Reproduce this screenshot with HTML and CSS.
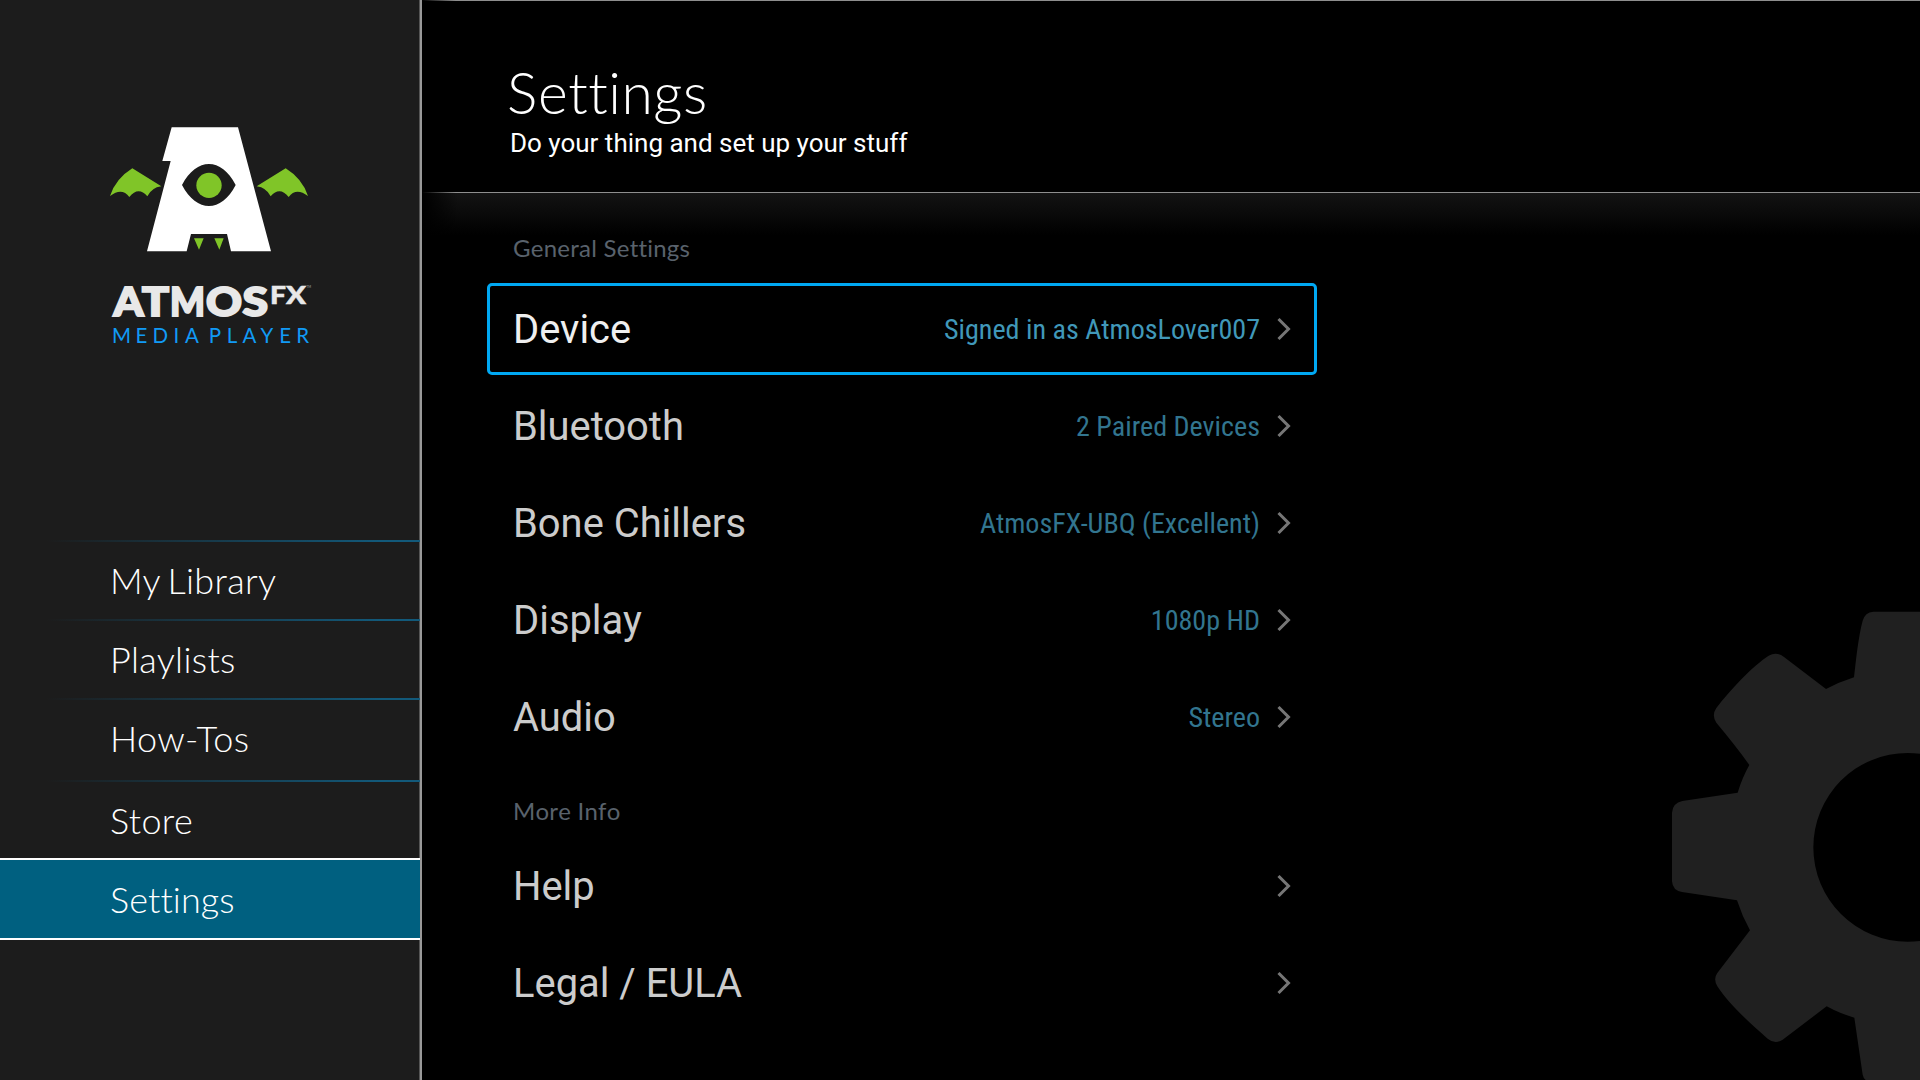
FILE: index.html
```html
<!DOCTYPE html>
<html lang="en">
<head>
<meta charset="utf-8">
<title>AtmosFX Media Player – Settings</title>
<link rel="stylesheet" href="styles.css">
</head>
<body>
<div class="app">
  <aside class="sidebar">
    <div class="brand">
      <svg class="brand-mark" viewBox="0 0 660 435" aria-hidden="true">
        <path class="mark-body" fill-rule="evenodd" d="M215 37H414L513 409H393L381 357H273L260 409H141L212 138H187ZM246 210C290 126 364 126 407 210C364 294 290 294 246 210Z"/>
        <circle class="mark-accent" cx="327" cy="211" r="38"/>
        <path class="mark-accent" d="M282 370H311L297 404ZM343 370H371L358 404Z"/>
        <path class="mark-accent" d="M97 160L184 214Q155 218 142 244Q115 213 88 246Q66 216 30 243Q47 191 97 160Z"/>
        <path class="mark-accent" d="M557 160L470 214Q499 218 512 244Q539 213 566 246Q588 216 624 243Q607 191 557 160Z"/>
      </svg>
      <svg class="brand-name" viewBox="0 0 220 85">
        <g class="word">
          <text x="13.500" y="45.500" textLength="30" lengthAdjust="spacingAndGlyphs">A</text>
          <text x="42" y="45.500" textLength="27" lengthAdjust="spacingAndGlyphs">T</text>
          <text x="70" y="45.500" textLength="35" lengthAdjust="spacingAndGlyphs">M</text>
          <text x="106" y="45.500" textLength="36" lengthAdjust="spacingAndGlyphs">O</text>
          <text x="142.500" y="45.500" textLength="25.500" lengthAdjust="spacingAndGlyphs">S</text>
        </g>
        <g class="word-fx">
          <text x="170" y="34" textLength="16" lengthAdjust="spacingAndGlyphs">F</text>
          <text x="186" y="34" textLength="20" lengthAdjust="spacingAndGlyphs">X</text>
        </g>
        <text class="word-tm" x="206.500" y="17.500">TM</text>
        <text class="tagline" x="12 35.500 52.500 73.500 85 95 108.800 126.800 142.500 160.500 179.300 196.300" y="72.700">MEDIA PLAYER</text>
      </svg>
    </div>
    <nav class="menu">
      <a class="menu-item">My Library</a>
      <a class="menu-item">Playlists</a>
      <a class="menu-item menu-item--tall">How-Tos</a>
      <a class="menu-item menu-item--short">Store</a>
      <a class="menu-item menu-item--active">Settings</a>
    </nav>
  </aside>
  <main class="content">
    <header class="page-header">
      <h1 class="page-title">Settings</h1>
      <p class="page-subtitle">Do your thing and set up your stuff</p>
    </header>
    <section class="settings">
      <h2 class="group-title">General Settings</h2>
      <div class="row row--focused"><span class="row-label">Device</span><span class="row-value">Signed in as AtmosLover007</span><svg class="chevron" viewBox="0 0 14 24"><path d="M1.500 2L11.500 12L1.500 22"/></svg></div>
      <div class="row"><span class="row-label">Bluetooth</span><span class="row-value">2 Paired Devices</span><svg class="chevron" viewBox="0 0 14 24"><path d="M1.500 2L11.500 12L1.500 22"/></svg></div>
      <div class="row"><span class="row-label">Bone Chillers</span><span class="row-value">AtmosFX-UBQ (Excellent)</span><svg class="chevron" viewBox="0 0 14 24"><path d="M1.500 2L11.500 12L1.500 22"/></svg></div>
      <div class="row"><span class="row-label">Display</span><span class="row-value">1080p HD</span><svg class="chevron" viewBox="0 0 14 24"><path d="M1.500 2L11.500 12L1.500 22"/></svg></div>
      <div class="row"><span class="row-label">Audio</span><span class="row-value">Stereo</span><svg class="chevron" viewBox="0 0 14 24"><path d="M1.500 2L11.500 12L1.500 22"/></svg></div>
      <h2 class="group-title group-title--more">More Info</h2>
      <div class="row"><span class="row-label">Help</span><svg class="chevron" viewBox="0 0 14 24"><path d="M1.500 2L11.500 12L1.500 22"/></svg></div>
      <div class="row"><span class="row-label">Legal / EULA</span><svg class="chevron" viewBox="0 0 14 24"><path d="M1.500 2L11.500 12L1.500 22"/></svg></div>
    </section>
    <svg class="gear" viewBox="0 0 840 1470" aria-hidden="true">
      <path fill-rule="evenodd" d="M840 65H700Q675 67 668 92C655 140 648 210 642 262Q598 276 558 297L432 201Q410 183 386 197C340 226 270 300 229 354Q214 376 229 398C265 441 300 485 328 525Q307 562 293 608L127 633Q98 639 96 668V874Q98 902 126 906L291 931Q306 978 330 1021L232 1149Q219 1167 232 1189C265 1240 330 1300 383 1346Q405 1364 428 1349L560 1249Q600 1271 643 1283L668 1454Q670 1464 677 1470H1086V772A283 283 0 1 0 520 772A283 283 0 1 0 1086 772V65Z"/>
    </svg>
  </main>
</div>
</body>
</html>
```
FILE: styles.css
```css
* { box-sizing: border-box; }

body {
  margin: 0;
  background: #000;
  color: #fff;
  font-family: Roboto, sans-serif;
  font-variant-ligatures: none;
}

.app {
  display: flex;
  width: 1920px;
  height: 1080px;
  overflow: hidden;
}

/* Sidebar */
.sidebar {
  flex: none;
  display: flex;
  flex-direction: column;
  width: 422px;
  background: #1c1c1c;
  border-right: 2px solid #999;
  box-shadow: inset -1px 0 #555;
}

.brand {
  display: flex;
  flex-direction: column;
  gap: 10px;
  height: 540px;
  padding: 115px 0 0 100px;
}

.brand-mark { width: 220px; height: 145px; }
.brand-name { width: 220px; height: 85px; overflow: visible; }
.mark-body { fill: #fff; }
.mark-accent { fill: #80c528; }

.brand-name text { font-family: Lato, sans-serif; }
.word { font-size: 40.5px; font-weight: 900; fill: #e8e8e8; stroke: #e8e8e8; stroke-width: 2px; }
.word-fx { font-size: 24.5px; font-weight: 900; fill: #e8e8e8; stroke: #e8e8e8; stroke-width: 0.5px; }
.brand-name .word-tm { font-size: 3px; fill: #aaa; }
.brand-name .tagline { font-size: 20.5px; fill: #119af5; }

.menu { display: flex; flex-direction: column; width: 420px; }

.menu-item {
  height: 79px;
  padding: 16px 0 0 110px;
  border-top: 2px solid;
  border-image: linear-gradient(to right, transparent 48px, #12597a 380px) 2;
  font: 300 36px/44px Lato, sans-serif;
  font-variant-ligatures: none;
  letter-spacing: 0.35px;
  word-spacing: -2.8px;
}
.menu-item--tall { height: 82px; }
.menu-item--short { height: 78px; }
.menu-item--active {
  height: 82px;
  padding-top: 17px;
  border: solid #fff;
  border-width: 2px 0;
  background: #006080;
  letter-spacing: 0.1px;
}

/* Content */
.content { position: relative; flex: 1; }

.page-header {
  height: 193px;
  padding: 58px 0 0 85px;
  background:
    linear-gradient(to right, transparent, #8e8e8e 34px) top / 100% 1px no-repeat,
    linear-gradient(to right, transparent, #8e8e8e 34px) bottom / 100% 1px no-repeat;
}

.page-title {
  margin: 0;
  font: 300 57px/69px Lato, sans-serif;
  font-kerning: none;
  font-variant-ligatures: none;
  letter-spacing: 0.5px;
}
.page-subtitle { margin: 0 0 0 3px; font-size: 26px; line-height: 32px; }

.settings {
  height: 887px;
  padding: 38px 0 0 65px;
  background:
    linear-gradient(to right, #000, transparent 36px),
    linear-gradient(to bottom, #131313, #000 42px);
}

.group-title {
  height: 52px;
  margin: 0 0 0 26px;
  font: 400 24px/34px Lato, sans-serif;
  font-kerning: none;
  font-variant-ligatures: none;
  letter-spacing: 0.22px;
  color: #59626c;
}
.group-title--more { height: 72px; padding-top: 26px; }

.row {
  display: flex;
  align-items: center;
  width: 830px;
  height: 92px;
  margin-bottom: 5px;
  padding: 0 23px;
  border: 3px solid transparent;
  border-radius: 5px;
  color: #ccc;
}
.row-label { padding-top: 2px; font-size: 39.9px; line-height: 48px; }
.row-value {
  margin-left: auto;
  padding-top: 2px;
  color: #32758f;
  font: 400 28.1px/34px "Roboto Condensed", Roboto, sans-serif;
  font-stretch: 75%;
}
.chevron {
  width: 14px;
  height: 24px;
  margin-left: 17px;
  fill: none;
  stroke: #767676;
  stroke-width: 3px;
}
.row-label + .chevron { margin-left: auto; }

.row--focused { border-color: #00a8f3; color: #efefef; }
.row--focused .row-value { color: #4098b9; }

/* Decorative gear behind the lower right corner */
.gear {
  position: absolute;
  right: 0;
  bottom: 0;
  width: 280px;
  height: 490px;
  fill: #202020;
}
```
